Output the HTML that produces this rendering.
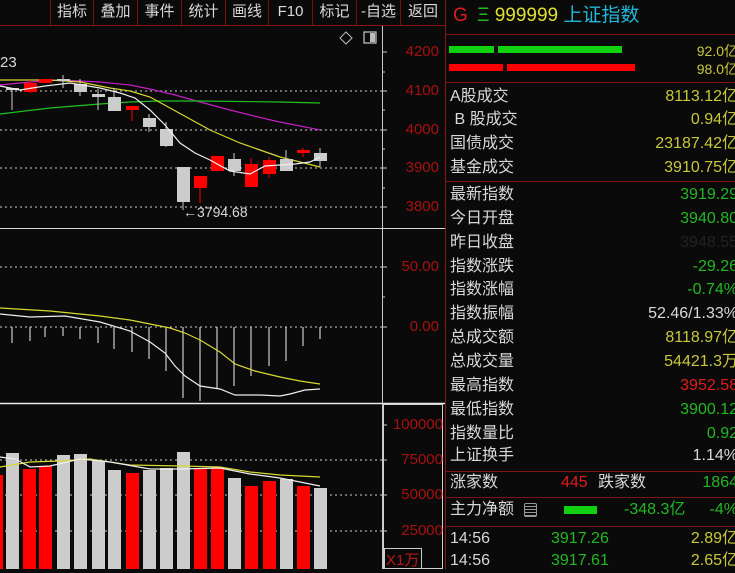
<!DOCTYPE html>
<html><head><meta charset="utf-8"><style>
*{margin:0;padding:0;box-sizing:border-box}
body{width:735px;height:569px;background:#0a0a0a;overflow:hidden;position:relative;font-family:"Liberation Sans","Noto Sans CJK SC",sans-serif;color:#d8d8d8}
.tb{position:absolute;top:0;height:25px;border-left:1px solid #7a1010;color:#d8d8d8;font-size:15px;line-height:24px;text-align:center}
.ax{position:absolute;color:#a81010;font-size:15px;text-align:right;width:62px}
.rp{position:absolute;left:445px;top:0;width:290px;height:569px;border-left:1px solid #8a1515}
.sep{position:absolute;left:0;width:290px;height:1px;background:#7a1515}
.row{position:absolute;left:4px;width:286px;height:24px;font-size:16px;line-height:24px}
.row .v{position:absolute;right:-2px;top:0}
.y{color:#c8c83a}.g{color:#22b822}.r{color:#e01c1c}.w{color:#d8d8d8}
</style></head><body>
<div style="position:absolute;left:0;top:25px;width:445px;height:1px;background:#8a1515"></div>
<div class="tb" style="left:50px;width:43px">指标</div>
<div class="tb" style="left:93px;width:44px">叠加</div>
<div class="tb" style="left:137px;width:44px">事件</div>
<div class="tb" style="left:181px;width:44px">统计</div>
<div class="tb" style="left:225px;width:43px">画线</div>
<div class="tb" style="left:268px;width:44px">F10</div>
<div class="tb" style="left:312px;width:44px">标记</div>
<div class="tb" style="left:356px;width:44px">-自选</div>
<div class="tb" style="left:400px;width:45px">返回</div>

<svg width="445" height="569" style="position:absolute;left:0;top:0" xmlns="http://www.w3.org/2000/svg">
<g stroke="#cfcfcf" stroke-width="1" stroke-dasharray="2,3">
<line x1="0" y1="91" x2="382" y2="91"/><line x1="0" y1="130" x2="382" y2="130"/>
<line x1="0" y1="168" x2="382" y2="168"/><line x1="0" y1="207" x2="382" y2="207"/>
<line x1="0" y1="267" x2="382" y2="267"/><line x1="0" y1="327" x2="382" y2="327"/>
<line x1="0" y1="460" x2="382" y2="460"/><line x1="0" y1="495" x2="382" y2="495"/><line x1="0" y1="531" x2="382" y2="531"/>
</g>
<line x1="382.5" y1="26" x2="382.5" y2="569" stroke="#c8c8c8"/>
<line x1="0" y1="228.5" x2="445" y2="228.5" stroke="#d8d8d8"/>
<line x1="0" y1="403.5" x2="445" y2="403.5" stroke="#e8e8e8" stroke-width="1.5"/>
<rect x="383.5" y="404.5" width="59" height="164" fill="none" stroke="#d0d0d0"/>
<g stroke="#c8c8c8"><line x1="382" y1="52" x2="387" y2="52"/><line x1="382" y1="72" x2="385" y2="72"/><line x1="382" y1="91" x2="387" y2="91"/><line x1="382" y1="110" x2="385" y2="110"/><line x1="382" y1="130" x2="387" y2="130"/><line x1="382" y1="149" x2="385" y2="149"/><line x1="382" y1="168" x2="387" y2="168"/><line x1="382" y1="188" x2="385" y2="188"/><line x1="382" y1="207" x2="387" y2="207"/><line x1="382" y1="267" x2="387" y2="267"/><line x1="382" y1="297" x2="385" y2="297"/><line x1="382" y1="327" x2="387" y2="327"/><line x1="382" y1="425" x2="387" y2="425"/><line x1="382" y1="460" x2="387" y2="460"/><line x1="382" y1="495" x2="387" y2="495"/><line x1="382" y1="531" x2="387" y2="531"/></g>
<path d="M346 32 L352 38 L346 44 L340 38 Z" fill="none" stroke="#bbb"/>
<rect x="364" y="32" width="12" height="11" fill="none" stroke="#bbb" stroke-width="1.3"/><rect x="370" y="33" width="5" height="9" fill="#bbb"/>
<polyline fill="none" stroke="#c020c0" stroke-width="1.2" points="0,85 30,82 60,80 100,82 130,85 150,89 175,95 200,102 230,110 250,115 275,121 295,125 320,130"/>
<polyline fill="none" stroke="#20c020" stroke-width="1.2" points="0,114 25,111 50,108 75,106 100,104 130,102 160,101 200,101 280,102 320,103"/>
<polyline fill="none" stroke="#d8d830" stroke-width="1.2" points="0,80 50,80 80,82 110,88 130,91 150,97 170,108 190,119 210,130 240,143 260,150 280,157 300,162 320,167"/>
<g stroke-width="1">
<line x1="12" y1="88" x2="12" y2="110" stroke="#ccc"/><rect x="6" y="88" width="13" height="2" fill="#ccc"/>
<line x1="30" y1="80" x2="30" y2="93" stroke="#f00"/><rect x="24" y="83" width="13" height="9" fill="#f00"/>
<rect x="39" y="79" width="13" height="4" fill="#f00"/>
<line x1="63" y1="75" x2="63" y2="88" stroke="#ccc"/><rect x="57" y="79" width="13" height="2" fill="#ccc"/>
<line x1="80" y1="79" x2="80" y2="96" stroke="#ccc"/><rect x="74" y="84" width="13" height="8" fill="#ccc"/>
<line x1="98" y1="89" x2="98" y2="110" stroke="#ccc"/><rect x="92" y="94" width="13" height="3" fill="#ccc"/>
<line x1="114" y1="88" x2="114" y2="111" stroke="#ccc"/><rect x="108" y="97" width="13" height="14" fill="#ccc"/>
<line x1="132" y1="106" x2="132" y2="121" stroke="#f00"/><rect x="126" y="106" width="13" height="4" fill="#f00"/>
<line x1="149" y1="114" x2="149" y2="132" stroke="#ccc"/><rect x="143" y="118" width="13" height="9" fill="#ccc"/>
<line x1="166" y1="122" x2="166" y2="147" stroke="#ccc"/><rect x="160" y="129" width="13" height="17" fill="#ccc"/>
<line x1="183" y1="167" x2="183" y2="210" stroke="#ccc"/><rect x="177" y="167" width="13" height="35" fill="#ccc"/>
<line x1="200" y1="176" x2="200" y2="203" stroke="#f00"/><rect x="194" y="176" width="13" height="12" fill="#f00"/>
<rect x="211" y="156" width="13" height="15" fill="#f00"/>
<line x1="234" y1="153" x2="234" y2="176" stroke="#ccc"/><rect x="228" y="159" width="13" height="12" fill="#ccc"/>
<line x1="251" y1="158" x2="251" y2="187" stroke="#f00"/><rect x="245" y="164" width="13" height="23" fill="#f00"/>
<line x1="269" y1="157" x2="269" y2="178" stroke="#f00"/><rect x="263" y="160" width="13" height="14" fill="#f00"/>
<line x1="286" y1="150" x2="286" y2="171" stroke="#ccc"/><rect x="280" y="159" width="13" height="12" fill="#ccc"/>
<line x1="303" y1="148" x2="303" y2="157" stroke="#f00"/><rect x="297" y="150" width="13" height="3" fill="#f00"/>
<line x1="320" y1="148" x2="320" y2="167" stroke="#ccc"/><rect x="314" y="153" width="13" height="8" fill="#ccc"/>
</g>
<polyline fill="none" stroke="#eee" stroke-width="1.2" points="0,86 20,90 45,86 70,83 100,88 120,93 135,98 150,110 165,125 180,143 195,153 210,160 230,171 250,174 265,166 280,165 295,164 310,162 320,157"/>
<text x="0" y="67" fill="#d8d8d8" font-size="15" font-family="Liberation Sans">23</text>
<text x="183" y="217" fill="#d8d8d8" font-size="14" font-family="Liberation Sans">←3794.68</text>
<g stroke="#ccc" stroke-width="1.2">
<line x1="12" y1="327" x2="12" y2="343"/><line x1="30" y1="327" x2="30" y2="341"/><line x1="45" y1="327" x2="45" y2="337"/><line x1="63" y1="327" x2="63" y2="336"/><line x1="80" y1="327" x2="80" y2="339"/><line x1="98" y1="327" x2="98" y2="343"/><line x1="114" y1="327" x2="114" y2="349"/><line x1="132" y1="327" x2="132" y2="352"/><line x1="149" y1="327" x2="149" y2="359"/><line x1="166" y1="327" x2="166" y2="371"/><line x1="183" y1="327" x2="183" y2="398"/><line x1="200" y1="327" x2="200" y2="401"/><line x1="217" y1="327" x2="217" y2="388"/><line x1="234" y1="327" x2="234" y2="386"/><line x1="251" y1="327" x2="251" y2="376"/><line x1="269" y1="327" x2="269" y2="366"/><line x1="286" y1="327" x2="286" y2="361"/><line x1="303" y1="327" x2="303" y2="346"/><line x1="320" y1="327" x2="320" y2="339"/>
</g>
<polyline fill="none" stroke="#d8d830" stroke-width="1.2" points="0,308 50,311 100,316 130,320 150,324 170,328 185,333 200,340 220,352 235,364 255,371 280,377 300,381 320,384"/>
<polyline fill="none" stroke="#eee" stroke-width="1.2" points="0,314 30,317 65,316 100,322 130,331 150,342 165,353 175,366 185,376 200,386 220,389 235,395 260,395 280,396 290,394 305,390 320,389"/>
<g>
<rect x="0" y="475" width="3" height="94" fill="#f00"/>
<rect x="6" y="453" width="13" height="116" fill="#ccc"/>
<rect x="23" y="469" width="13" height="100" fill="#f00"/>
<rect x="39" y="466" width="13" height="103" fill="#f00"/>
<rect x="57" y="455" width="13" height="114" fill="#ccc"/>
<rect x="74" y="454" width="13" height="115" fill="#ccc"/>
<rect x="92" y="461" width="13" height="108" fill="#ccc"/>
<rect x="108" y="470" width="13" height="99" fill="#ccc"/>
<rect x="126" y="473" width="13" height="96" fill="#f00"/>
<rect x="143" y="470" width="13" height="99" fill="#ccc"/>
<rect x="160" y="468" width="13" height="101" fill="#ccc"/>
<rect x="177" y="452" width="13" height="117" fill="#ccc"/>
<rect x="194" y="469" width="13" height="100" fill="#f00"/>
<rect x="211" y="467" width="13" height="102" fill="#f00"/>
<rect x="228" y="478" width="13" height="91" fill="#ccc"/>
<rect x="245" y="486" width="13" height="83" fill="#f00"/>
<rect x="263" y="481" width="13" height="88" fill="#f00"/>
<rect x="280" y="479" width="13" height="90" fill="#ccc"/>
<rect x="297" y="486" width="13" height="83" fill="#f00"/>
<rect x="314" y="488" width="13" height="81" fill="#ccc"/>
</g>
<polyline fill="none" stroke="#d8d830" stroke-width="1.2" points="0,467 30,462 60,461 90,459 130,465 180,466 220,467 250,472 280,475 320,477"/>
<polyline fill="none" stroke="#eee" stroke-width="1.2" points="0,457 15,459 30,467 50,466 80,459 110,462 150,469 180,469 220,468 250,474 280,478 320,486"/>
<rect x="384.5" y="548.5" width="37" height="20" fill="none" stroke="#ccc"/>
<text x="386" y="565" fill="#b81818" font-size="15" font-family="Liberation Sans,Noto Sans CJK SC,sans-serif">X1万</text>
</svg>
<div class="ax" style="left:377px;top:43px">4200</div>
<div class="ax" style="left:377px;top:82px">4100</div>
<div class="ax" style="left:377px;top:121px">4000</div>
<div class="ax" style="left:377px;top:159px">3900</div>
<div class="ax" style="left:377px;top:198px">3800</div>
<div class="ax" style="left:377px;top:258px">50.00</div>
<div class="ax" style="left:377px;top:318px">0.00</div>
<div class="ax" style="left:381px;top:416px">100000</div>
<div class="ax" style="left:381px;top:451px">75000</div>
<div class="ax" style="left:381px;top:486px">50000</div>
<div class="ax" style="left:381px;top:522px">25000</div>

<div class="rp">
<div style="position:absolute;left:7px;top:4px;font-size:19px;line-height:24px;white-space:nowrap"><span class="r">G</span> <span class="g" style="margin-left:4px">Ξ</span> <span style="color:#e0e030">999999</span> <span style="color:#20b8d8">上证指数</span></div>
<div class="sep" style="top:34px"></div>
<div style="position:absolute;left:3px;top:46px;width:45px;height:7px;background:#10d010"></div>
<div style="position:absolute;left:52px;top:46px;width:124px;height:7px;background:#10d010"></div>
<div style="position:absolute;left:3px;top:64px;width:54px;height:7px;background:#f00"></div>
<div style="position:absolute;left:61px;top:64px;width:128px;height:7px;background:#f00"></div>
<div class="y" style="position:absolute;right:-3px;top:41px;font-size:14px">92.0亿</div>
<div class="y" style="position:absolute;right:-3px;top:59px;font-size:14px">98.0亿</div>
<div class="sep" style="top:82px"></div>
<div class="row" style="top:85px">A股成交<span class="v y">8113.12亿</span></div>
<div class="row" style="top:108px">&nbsp;B 股成交<span class="v y">0.94亿</span></div>
<div class="row" style="top:132px">国债成交<span class="v y">23187.42亿</span></div>
<div class="row" style="top:156px">基金成交<span class="v y">3910.75亿</span></div>
<div class="sep" style="top:181px"></div>
<div class="row" style="top:183px">最新指数<span class="v g">3919.29</span></div>
<div class="row" style="top:207px">今日开盘<span class="v g">3940.80</span></div>
<div class="row" style="top:231px">昨日收盘<span class="v" style="color:#222">3948.55</span></div>
<div class="row" style="top:255px">指数涨跌<span class="v g">-29.26</span></div>
<div class="row" style="top:278px">指数涨幅<span class="v g">-0.74%</span></div>
<div class="row" style="top:302px">指数振幅<span class="v w">52.46/1.33%</span></div>
<div class="row" style="top:326px">总成交额<span class="v y">8118.97亿</span></div>
<div class="row" style="top:350px">总成交量<span class="v y">54421.3万</span></div>
<div class="row" style="top:374px">最高指数<span class="v r">3952.58</span></div>
<div class="row" style="top:398px">最低指数<span class="v g">3900.12</span></div>
<div class="row" style="top:422px">指数量比<span class="v g">0.92</span></div>
<div class="row" style="top:444px">上证换手<span class="v w">1.14%</span></div>
<div class="sep" style="top:471px"></div>
<div class="row" style="top:471px">涨家数<span class="r" style="position:absolute;left:111px">445</span><span style="position:absolute;left:148px">跌家数</span><span class="v g">1864</span></div>
<div class="sep" style="top:497px"></div>
<div class="row" style="top:498px">主力净额<span style="position:absolute;left:74px;top:5px;width:13px;height:14px;border:1px solid #999;border-radius:2px;background:repeating-linear-gradient(#0a0a0a 0 2px,#999 2px 3px)"></span><span style="position:absolute;left:114px;top:8px;width:33px;height:8px;background:#10d010"></span><span class="g" style="position:absolute;left:174px">-348.3亿</span><span class="v g">-4%</span></div>
<div class="sep" style="top:526px"></div>
<div class="row" style="top:527px">14:56<span class="g" style="position:absolute;left:101px">3917.26</span><span class="v y">2.89亿</span></div>
<div class="row" style="top:549px">14:56<span class="g" style="position:absolute;left:101px">3917.61</span><span class="v y">2.65亿</span></div>
</div>
</body></html>
